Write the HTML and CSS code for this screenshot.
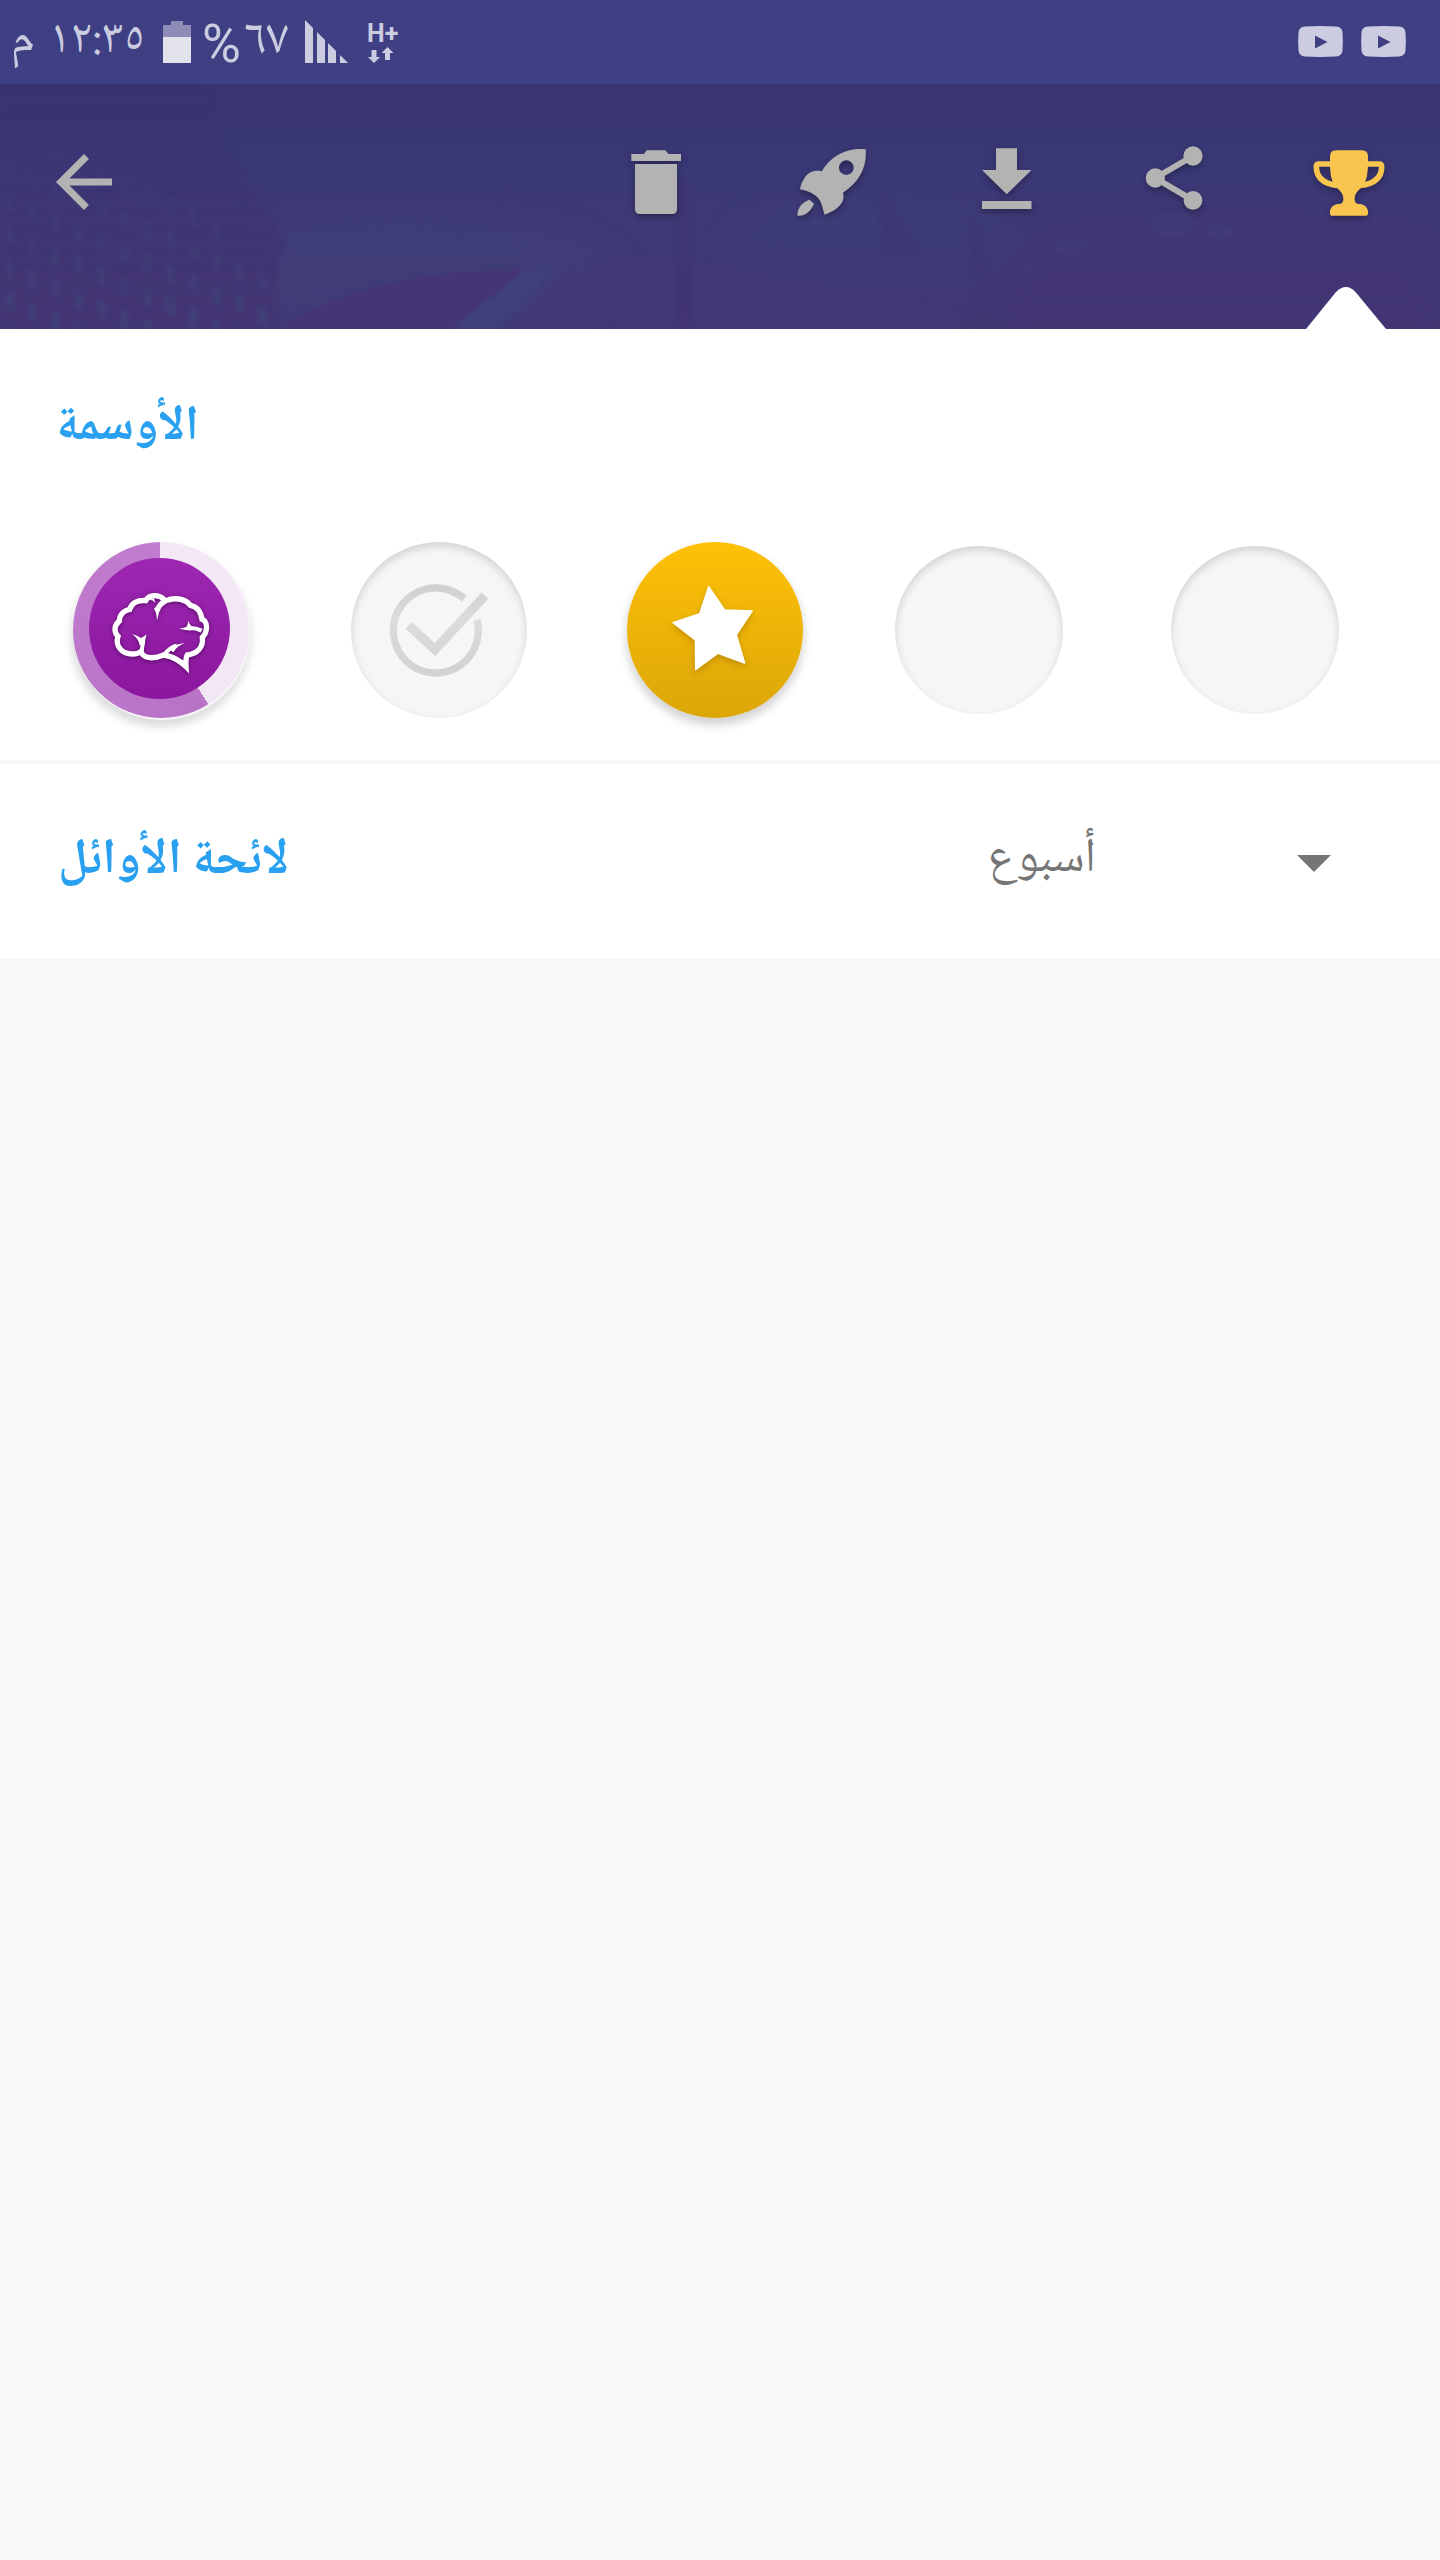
FILE: index.html
```html
<!DOCTYPE html>
<html lang="ar">
<head>
    <meta charset="UTF-8">
    <meta name="viewport" content="width=device-width, initial-scale=1.0">
    <title>الأوسمة</title>
    <link rel="stylesheet" href="styles.css">
</head>
<body>
    <div class="status-bar">
        <span class="meridiem" dir="rtl">م</span>
        <span class="time" dir="rtl">١٢:٣٥</span>
        <svg class="battery" viewBox="0 0 28 42">
            <path d="M8 0h12v4h8v12H0V4h8z" fill="#8d8cb7"/>
            <path d="M0 16h28v26H0z" fill="#e2e2ec"/>
        </svg>
        <span class="percent">%</span>
        <span class="level" dir="rtl">٦٧</span>
        <svg class="signal" viewBox="0 0 43 43">
            <path d="M0 0l8 8v35H0zM12 12l8 8v23h-8zM23 23l8 8v12h-8zM35 35l8 8h-8z" fill="#cccce0"/>
        </svg>
        <div class="network">
            <span>H+</span>
            <svg viewBox="0 0 26 16">
                <path d="M3.500 3h5v7H12l-6 6-6-6h3.500zM13.500 6l6-6 6 6H22v7h-5V6z" fill="#cccce0"/>
            </svg>
        </div>
        <div class="notifications">
            <svg viewBox="0 0 45 31">
                <path d="M7 .5q15.500-1 31 0 6 .5 6.500 6 .6 9 0 18-.5 5.500-6.500 6-15.500.8-31 0-6-.5-6.500-6-.6-9 0-18 .5-5.500 6.500-6zM17 9.500v13L29.500 16z" fill="#cccce0" fill-rule="evenodd"/>
            </svg>
            <svg viewBox="0 0 45 31">
                <path d="M7 .5q15.500-1 31 0 6 .5 6.500 6 .6 9 0 18-.5 5.500-6.500 6-15.500.8-31 0-6-.5-6.500-6-.6-9 0-18 .5-5.500 6.500-6zM17 9.500v13L29.500 16z" fill="#cccce0" fill-rule="evenodd"/>
            </svg>
        </div>
    </div>

    <header class="header">
        <!-- Faded street photo behind the toolbar -->
        <svg class="backdrop" viewBox="0 0 1440 245" preserveAspectRatio="none">
            <defs>
                <filter id="soft" x="-10%" y="-10%" width="120%" height="120%"><feGaussianBlur stdDeviation="2"/></filter>
                <filter id="softer" x="-30%" y="-30%" width="160%" height="160%"><feGaussianBlur stdDeviation="14"/></filter>
                <linearGradient id="wall" x1="0" y1="0" x2="0" y2="1">
                    <stop offset="0" stop-color="#3c3470" stop-opacity="0"/>
                    <stop offset=".3" stop-color="#3d3472" stop-opacity=".4"/>
                    <stop offset=".65" stop-color="#403472" stop-opacity=".9"/>
                    <stop offset="1" stop-color="#443674"/>
                </linearGradient>
                <linearGradient id="fade" x1="0" y1="0" x2="0" y2="1">
                    <stop offset="0" stop-color="#000"/>
                    <stop offset=".4" stop-color="#555"/>
                    <stop offset="1" stop-color="#fff"/>
                </linearGradient>
                <mask id="fade-top"><rect width="290" height="245" fill="url(#fade)"/></mask>
                <pattern id="windows" width="23" height="33" patternUnits="userSpaceOnUse" patternTransform="skewY(24)">
                    <rect x="5" y="5" width="9" height="20" rx="4" fill="#3f437b" opacity=".65"/>
                </pattern>
            </defs>
            <ellipse cx="400" cy="190" rx="220" ry="60" fill="#3f4179" opacity=".6" filter="url(#softer)"/>
            <ellipse cx="880" cy="160" rx="150" ry="45" fill="#3e407a" opacity=".4" filter="url(#softer)"/>
            <g filter="url(#soft)">
                <path d="M0 0H200L230 70 276 140 287 166 278 172V245H0z" fill="url(#wall)"/>
                <g mask="url(#fade-top)">
                    <path d="M0 30L110 70 200 120 272 200V245H0z" fill="url(#windows)"/>
                </g>
                <path d="M280 243Q380 184 525 186L450 245H280z" fill="#443674"/>
                <path d="M525 186L560 182 500 245H450z" fill="#41417a"/>
                <path d="M560 190Q640 160 676 175L960 225V250H500z" fill="#43397a" opacity=".6"/>
                <path d="M678 100h12v145h-12z" fill="#403273" opacity=".6"/>
                <path d="M880 112l8 4 4 26 10-8 6 20 10 5v20l-34-10zM968 130l10 10 8 50h-18z" fill="#413373" opacity=".4"/>
            </g>
            <path d="M1000 245V170L1060 135 1250 120 1440 135V245z" fill="#443574" opacity=".6" filter="url(#softer)"/>
            <g fill="#3f427a" opacity=".4" filter="url(#soft)">
                <ellipse cx="1172" cy="140" rx="24" ry="11"/>
                <ellipse cx="1219" cy="147" rx="15" ry="7"/>
                <ellipse cx="1070" cy="162" rx="18" ry="8"/>
            </g>
        </svg>

        <a class="back">
            <svg viewBox="0 0 24 24"><path d="M20 11H7.830l5.590-5.590L12 4l-8 8 8 8 1.410-1.410L7.830 13H20v-2z"/></svg>
        </a>
        <nav class="actions">
            <!-- Delete -->
            <svg viewBox="0 0 172 72"><path d="M61.300 8h12.500l3-3.700h18.500l3.200 3.700H111v7H61.300zM65 18h42v45q0 5-5 5H70q-5 0-5-5z"/></svg>
            <!-- Launch -->
            <svg viewBox="0 0 172 72">
                <g transform="translate(-142 -26) scale(.33333)">
                    <path fill-rule="evenodd" d="M797 88C740 80 688 112 666 154 640 149 626 158 615 172 606 185 602 196 600 208 628 214 642 221 655 235 667 250 668 268 674 284 700 274 718 262 727 245 732 235 731 225 729 218 775 188 802 145 797 88zM761 143a22 22 0 1 1-44 0 22 22 0 0 1 44 0z"/>
                    <path d="M628 239l14 12C635 268 618 290 592 287 592 264 605 248 628 239z"/>
                </g>
            </svg>
            <!-- Download -->
            <svg viewBox="0 0 172 72"><path d="M82 2.300h21V24h14.500l-24.800 24.300L68 24h14zM68 55h49.500v8H68z"/></svg>
            <!-- Share -->
            <svg viewBox="0 0 172 72">
                <g transform="translate(-66 -26) scale(.33333)">
                    <path d="M519 108L406 174 519 241" fill="none" stroke="#b3b3b3" stroke-width="18"/>
                    <circle cx="406" cy="174" r="29"/>
                    <circle cx="519" cy="108" r="29"/>
                    <circle cx="519" cy="241" r="28"/>
                </g>
            </svg>
            <!-- Achievements -->
            <svg class="active" viewBox="0 0 172 72">
                <g transform="translate(-238 -26) scale(.33333)">
                    <path d="M938 132H896Q889 132 889 140 889 188 951 196M1036 132H1078Q1085 132 1085 140 1085 188 1023 196" fill="none" stroke="#f9c54e" stroke-width="17"/>
                    <path d="M948 91H1026Q1044 91 1044 109C1045 165 1040 185 1024 203 1012 213 1004 222 1004 236 1004 248 1008 251 1019 252 1036 254 1044 264 1044 276V281Q1044 287 1038 287H936Q930 287 930 281V276C930 264 938 254 955 252 966 251 970 248 970 236 970 222 962 213 950 203 934 185 929 165 930 109Q930 91 948 91z"/>
                </g>
            </svg>
        </nav>
        <svg class="pointer" viewBox="0 0 80 43"><path d="M0 43L30 6Q40-4 49.500 6L80 43z" fill="#fff"/></svg>
    </header>

    <section class="badges">
        <h2 dir="rtl">الأوسمة</h2>
        <div class="badge-list">
            <div class="badge brain">
                <div class="disc"></div>
                <svg viewBox="69 66 528 528">
                    <g class="brain-lines">
                        <path d="M342 238C326 222 297 223 287 242 262 239 245 250 239 268 222 271 208 285 208 303 192 315 191 337 204 349 195 377 214 402 247 402 260 402 267 400 273 394 278 413 304 420 341 405 370 409 390 422 408 440 407 424 407 413 412 405 441 402 461 382 457 352 474 334 474 305 456 298 452 272 438 259 421 256 405 234 370 232 348 242 332 250 324 262 321 273" stroke-width="16"/>
                        <path d="M273 397Q280 378 276 362M341 405Q362 380 380 377M455 332Q438 324 420 324" stroke-width="12"/>
                    </g>
                    <path d="M312 264Q320 278 321 300 327 286 328 262zM288 242Q308 235 316 250L312 234zM246 342Q262 347 273 354 283 350 290 343 285 357 284 375L269 376Q267 357 246 342zM360 389Q377 370 405 370 384 375 370 397zM386 325Q404 325 411 319L416 302Q418 316 429 320L426 331Q405 333 386 325z" fill="#fff"/>
                </svg>
            </div>
            <div class="badge locked check">
                <svg viewBox="64 66 528 528">
                    <defs>
                        <linearGradient id="tick" gradientUnits="userSpaceOnUse" x1="0" y1="190" x2="0" y2="468">
                            <stop offset="0" stop-color="#cfcfcf"/>
                            <stop offset=".4" stop-color="#dcdcdc"/>
                            <stop offset="1" stop-color="#d2d2d2"/>
                        </linearGradient>
                    </defs>
                    <g fill="none" stroke="url(#tick)">
                        <path d="M403 236A127.500 127.500 0 1 0 442 300" stroke-width="22"/>
                        <path d="M237 316L316 388 466 227" stroke-width="28"/>
                    </g>
                </svg>
            </div>
            <div class="badge star">
                <svg viewBox="82 66 528 528">
                    <path d="M327 200L375 270 458 273 410 345 435 429 355 400 288 449 287 360 220 308 300 281z" fill="#fff" stroke="#fff" stroke-width="4" stroke-linejoin="round"/>
                </svg>
            </div>
            <div class="badge locked small"></div>
            <div class="badge locked small last"></div>
        </div>
    </section>

    <section class="leaderboard">
        <h2 dir="rtl">لائحة الأوائل</h2>
        <div class="period">
            <span class="period-name" dir="rtl">أسبوع</span>
            <span class="caret"></span>
        </div>
    </section>
</body>
</html>
```

FILE: styles.css
```css
* {
    box-sizing: border-box;
}

body {
    margin: 0;
    width: 1440px;
    min-height: 2560px;
    background-color: #f8f8f8;
    font-family: 'Noto Naskh Arabic', 'Noto Sans Arabic', 'DejaVu Sans', sans-serif;
}

svg {
    display: block;
    overflow: visible;
}

/* Status bar */
.status-bar {
    display: flex;
    align-items: flex-start;
    height: 84px;
    padding: 20px 34px 0 13px;
    background-color: #3f3f84;
    color: #cccce0;
    font-size: 48px;
    line-height: 42px;
    white-space: nowrap;
}

.meridiem {
    width: 22px;
    margin: 2px 18px 0 0;
    font-size: 50px;
}

.time {
    width: 92px;
    margin: 1px 18px 0 0;
}

.battery {
    width: 28px;
    height: 42px;
    margin-top: 1px;
}

.percent {
    width: 36px;
    margin: 3px 2px 0 11px;
    font-family: Roboto, sans-serif;
    font-size: 53px;
}

.level {
    width: 49px;
    margin: 2px 16px 0 0;
    font-size: 50px;
}

.signal {
    width: 43px;
    height: 43px;
}

.network {
    width: 30px;
    margin: 1px 0 0 19px;
    font-family: Roboto, sans-serif;
    font-size: 25px;
    font-weight: bold;
    line-height: 25px;
}

.network span {
    display: block;
}

.network svg {
    width: 26px;
    height: 16px;
    margin: 1px 0 0 1px;
}

.notifications {
    display: flex;
    gap: 18px;
    margin: 6px 0 0 auto;
}

.notifications svg {
    width: 45px;
    height: 31px;
}

/* Header */
.header {
    position: relative;
    display: flex;
    justify-content: space-between;
    height: 245px;
    padding: 56px 10px 0 42px;
    background: linear-gradient(#383471 0, #393875 30%, #3e3a77 60%, #433774 100%);
}

.backdrop {
    position: absolute;
    top: 0;
    left: 0;
    width: 1440px;
    height: 245px;
    overflow: hidden;
}

.back {
    position: relative;
    width: 84px;
    height: 84px;
    fill: #b3b3b3;
}

.actions {
    position: relative;
    display: flex;
    padding-top: 6px;
}

.actions svg {
    width: 172px;
    height: 72px;
    fill: #b3b3b3;
    filter: drop-shadow(0 3px 3px rgba(0, 0, 0, 0.3));
}

.actions .active {
    fill: #f9c54e;
}

.pointer {
    position: absolute;
    right: 54px;
    bottom: 0;
    width: 80px;
    height: 43px;
}

/* Sections */
h2 {
    margin: 0;
    color: #2aa1f0;
    font-size: 49.5px;
    font-weight: bold;
    line-height: 60px;
    white-space: nowrap;
}

.badges {
    height: 435px;
    padding-top: 70px;
    background-color: #fff;
    border-bottom: 4px solid #f8f8f8;
}

.badges h2 {
    width: 139px;
    margin-left: 60px;
    font-size: 49px;
}

.badge-list {
    display: flex;
    align-items: center;
    gap: 100px;
    margin-top: 83px;
    padding-left: 73px;
}

.badge {
    display: flex;
    flex: none;
    align-items: center;
    justify-content: center;
    width: 176px;
    height: 176px;
    border-radius: 50%;
}

.badge svg {
    width: 176px;
    height: 176px;
}

.brain {
    display: grid;
    place-items: center;
    background: conic-gradient(from -0.5deg, #f3e7f6 0 148deg, #b973c6 148deg, #c17ccf 360deg);
    box-shadow: 1px 1px 0 1px #f6f4f7, 0 7px 9px 2px rgba(0, 0, 0, 0.14);
}

.brain .disc,
.brain svg {
    grid-area: 1 / 1;
}

.disc {
    width: 141px;
    height: 141px;
    margin: 0 3px 3px 0;
    border-radius: 50%;
    background: linear-gradient(#9d27b2, #8a179d);
}

.brain-lines {
    fill: none;
    stroke: #fff;
    stroke-linejoin: miter;
}

.brain svg {
    filter: drop-shadow(0 1px 2px rgba(50, 0, 60, 0.6));
}

.locked {
    background-color: #f6f6f6;
    box-shadow: inset 0 4px 8px rgba(0, 0, 0, 0.15);
}

.check {
    margin-left: 2px;
}

.star {
    background: linear-gradient(#ffc107, #dba608);
    box-shadow: 0 6px 10px 1px rgba(0, 0, 0, 0.18);
}

.star svg {
    filter: drop-shadow(0 3px 3px rgba(120, 80, 0, 0.35));
}

.small {
    width: 168px;
    height: 168px;
    margin-left: -8px;
}

.last {
    margin-left: 8px;
}

.leaderboard {
    display: flex;
    justify-content: space-between;
    height: 195px;
    padding: 66px 109px 0 58px;
    background-color: #fff;
}

.leaderboard h2 {
    width: 231px;
    margin-top: 2px;
}

.period {
    display: flex;
    width: 341px;
    justify-content: space-between;
    color: #757575;
    font-size: 48px;
    line-height: 62px;
}

.period-name {
    width: 106px;
}

.caret {
    width: 34px;
    height: 17px;
    margin-top: 25px;
    background-color: #757575;
    clip-path: polygon(0 0, 100% 0, 50% 100%);
}
```
